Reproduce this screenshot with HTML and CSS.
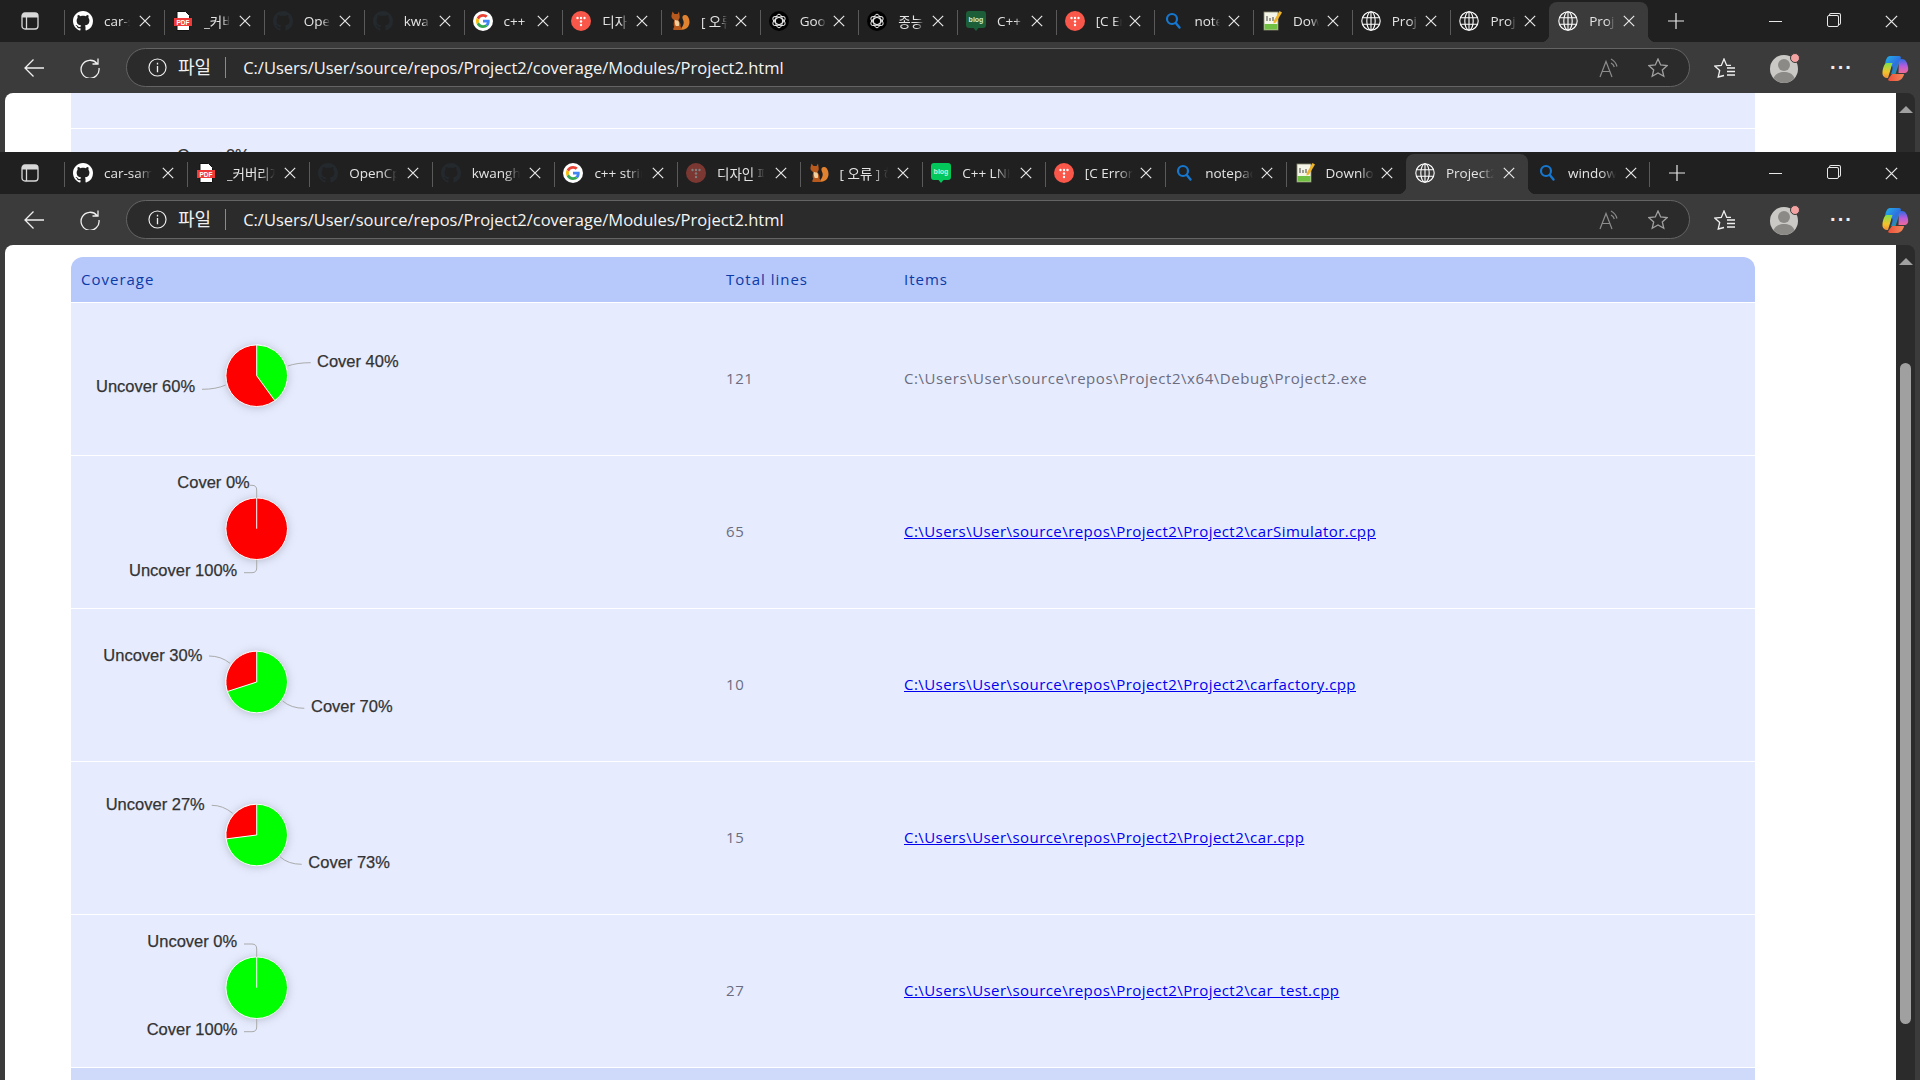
FILE: index.html
```html
<!DOCTYPE html>
<html lang="ko">
<head>
    <meta charset="utf-8">
    <title>Project2 coverage</title>
    <link rel="stylesheet" href="styles.css">
</head>

<body>
    <!-- shared icons -->
    <svg class="defs" aria-hidden="true">
        <defs>
            <linearGradient id="copA" x1="0" y1="0" x2="1" y2="1">
                <stop offset="0" stop-color="#1fb6e8"/>
                <stop offset=".55" stop-color="#2f6fe0"/>
                <stop offset="1" stop-color="#23b26b"/>
            </linearGradient>
            <linearGradient id="copB" x1="0" y1="0" x2="0" y2="1">
                <stop offset="0" stop-color="#2d6be4"/>
                <stop offset=".5" stop-color="#b45cdc"/>
                <stop offset="1" stop-color="#f06a9a"/>
            </linearGradient>
            <linearGradient id="copC" x1="0" y1="0" x2="0" y2="1">
                <stop offset="0" stop-color="#7de04a"/>
                <stop offset=".6" stop-color="#f3c52c"/>
                <stop offset="1" stop-color="#f0903a"/>
            </linearGradient>
            <linearGradient id="copD" x1="0" y1="0" x2="1" y2="0">
                <stop offset="0" stop-color="#f0503c"/>
                <stop offset="1" stop-color="#f08a5a"/>
            </linearGradient>
        </defs>
        <symbol id="gh" viewBox="0 0 16 16"><path fill="currentColor" d="M8 0C3.58 0 0 3.58 0 8c0 3.54 2.29 6.53 5.47 7.59.4.07.55-.17.55-.38 0-.19-.01-.82-.01-1.49-2.01.37-2.53-.49-2.69-.94-.09-.23-.48-.94-.82-1.13-.28-.15-.68-.52-.01-.53.63-.01 1.08.58 1.23.82.72 1.21 1.87.87 2.33.66.07-.52.28-.87.51-1.07-1.78-.2-3.64-.89-3.64-3.95 0-.87.31-1.59.82-2.15-.08-.2-.36-1.02.08-2.12 0 0 .67-.21 2.2.82.64-.18 1.32-.27 2-.27.68 0 1.36.09 2 .27 1.53-1.04 2.2-.82 2.2-.82.44 1.1.16 1.92.08 2.12.51.56.82 1.27.82 2.15 0 3.07-1.87 3.75-3.65 3.95.29.25.54.73.54 1.48 0 1.07-.01 1.93-.01 2.2 0 .21.15.46.55.38A8.013 8.013 0 0016 8c0-4.42-3.58-8-8-8z"/></symbol>
        <symbol id="pdf" viewBox="0 0 20 20"><path fill="#fff" stroke="#111" d="M4 .5h8.500l4 4V19.500H4z"/><rect x="1" y="7" width="18" height="8" fill="#f03a3a"/><text x="10" y="13.500" class="pdf-text">PDF</text></symbol>
        <symbol id="google" viewBox="0 0 48 48"><circle cx="24" cy="24" r="24" fill="#fff"/><g transform="translate(7.200 7.200) scale(.7)"><path fill="#EA4335" d="M24 9.500c3.540 0 6.710 1.220 9.210 3.600l6.850-6.850C35.900 2.380 30.470 0 24 0 14.620 0 6.510 5.380 2.560 13.220l7.980 6.190C12.430 13.720 17.740 9.500 24 9.500z"/><path fill="#4285F4" d="M46.980 24.550c0-1.570-.15-3.090-.38-4.550H24v9.020h12.940c-.58 2.960-2.260 5.480-4.780 7.180l7.730 6c4.510-4.180 7.090-10.360 7.090-17.650z"/><path fill="#FBBC05" d="M10.530 28.590c-.48-1.450-.76-2.990-.76-4.590s.27-3.140.76-4.590l-7.980-6.190C.92 16.460 0 20.120 0 24c0 3.880.92 7.540 2.560 10.780l7.970-6.190z"/><path fill="#34A853" d="M24 48c6.480 0 11.930-2.130 15.890-5.810l-7.730-6c-2.150 1.450-4.920 2.300-8.160 2.300-6.260 0-11.570-4.220-13.470-9.910l-7.980 6.190C6.510 42.620 14.620 48 24 48z"/></g></symbol>
        <symbol id="tistory" viewBox="0 0 20 20"><circle cx="10" cy="10" r="10" fill="#f9574a"/><g fill="#fff"><circle cx="6.500" cy="7" r="1.200"/><circle cx="10" cy="7" r="1.200"/><circle cx="13.500" cy="7" r="1.200"/><circle cx="10" cy="10.500" r="1.200"/><circle cx="10" cy="14" r="1.200"/></g></symbol>
        <symbol id="squirrel" viewBox="0 0 20 20"><path fill="#e0822f" d="M10 19c6 0 9.500-3 9.500-8 0-3.500-1.500-6.500-4-7-2.200-.4-3.500 1.300-3 3.200.6 2.200 1.700 3.300 1 5.800-.5 2-2 4-3.500 6z"/><path fill="#b8591d" d="M2.500 .5L4.500 3h3L9 .5l.7 4.500c.3 2-.6 3.500-1.500 4.200 1.700 1.600 2.800 4 2.300 6.300.6.800 1.500 2 2 3.500H3.500c-.5-1.500 0-2.500.8-3-1-2-.8-4.500.2-6.500C2.500 8 1 6.500 1.500 4.500z"/><path fill="#f2cf9f" d="M4.800 8.800c1 .8 2.200 1 3.400.6.900 1.700 1.200 3.500.6 5.600H5.800c-1-2-1.200-4.200-1-6.200z"/></symbol>
        <symbol id="gpt" viewBox="0 0 20 20"><circle cx="10" cy="10" r="10" fill="#000"/><g fill="none" stroke="#e8e8e8" stroke-width="1"><ellipse cx="10" cy="10" rx="3.500" ry="6.800"/><ellipse cx="10" cy="10" rx="3.500" ry="6.800" transform="rotate(60 10 10)"/><ellipse cx="10" cy="10" rx="3.500" ry="6.800" transform="rotate(120 10 10)"/></g></symbol>
        <symbol id="blog" viewBox="0 0 20 20"><path fill="currentColor" d="M3 0h14a3 3 0 013 3v11a3 3 0 01-3 3h-4.500L10 20l-2.500-3H3a3 3 0 01-3-3V3a3 3 0 013-3z"/><text x="10" y="11" class="blog-text">blog</text></symbol>
        <symbol id="search" viewBox="0 0 20 20"><circle cx="9" cy="8" r="5" fill="none" stroke="#1577cf" stroke-width="2.200"/><path stroke="#1577cf" stroke-width="2.400" stroke-linecap="round" d="M12.800 12l3.700 4.500"/></symbol>
        <symbol id="notepad" viewBox="0 0 20 20"><rect x="2" y="1" width="14" height="18" fill="#f6f6e8" stroke="#8a8a70" stroke-width=".8"/><rect x="2.500" y="13" width="13" height="5.600" fill="#72c043"/><path stroke="#444" d="M5 5v5M8 7v3M11 6v4"/><path fill="#f0b429" d="M17.500 0L20 1.500l-6 10-2.500 1 .2-2.600z"/></symbol>
        <symbol id="globe" viewBox="0 0 20 20"><g fill="none" stroke="currentColor" stroke-width="1.100"><circle cx="10" cy="10" r="9.200"/><ellipse cx="10" cy="10" rx="4.200" ry="9.200"/><path d="M1.500 6.700h17M1.500 13.300h17M10 .8v18.400"/></g></symbol>
        <symbol id="close" viewBox="0 0 12 12"><path stroke="currentColor" stroke-width="1.200" d="M.8.8l10.400 10.400M11.200.8L.8 11.200"/></symbol>
        <symbol id="sidebar" viewBox="0 0 18 18"><rect x="1" y="1" width="16" height="16" rx="3" fill="none" stroke="currentColor" stroke-width="1.300"/><path fill="currentColor" d="M1 4a3 3 0 013-3h10a3 3 0 013 3v1.500H1z"/><path stroke="currentColor" stroke-width="1.300" d="M5.500 5v12"/></symbol>
        <symbol id="back" viewBox="0 0 20 20"><path fill="none" stroke="currentColor" stroke-width="1.300" d="M20 10H1M9.500 1.500L1 10l8.500 8.500"/></symbol>
        <symbol id="reload" viewBox="0 0 20 20"><path fill="none" stroke="currentColor" stroke-width="1.300" d="M17 5.500A9 9 0 1019 10M18 .5V6h-5.500"/></symbol>
        <symbol id="info" viewBox="0 0 20 20"><circle cx="10" cy="10" r="9" fill="none" stroke="currentColor" stroke-width="1.200"/><path stroke="currentColor" stroke-width="1.400" d="M10 8.500V15M10 5v1.800"/></symbol>
        <symbol id="aloud" viewBox="0 0 20 20"><path fill="none" stroke="currentColor" stroke-width="1.200" d="M1 19L7 3.500 13 19M3 13.500h8M12 1c3 1.500 5 4 6 7.500M12 5c1.600.8 2.800 2.200 3.300 4"/></symbol>
        <symbol id="star" viewBox="0 0 20 20"><path fill="none" stroke="currentColor" stroke-width="1.300" d="M10 1l2.700 6 6.500.6-4.900 4.300 1.500 6.400L10 15l-5.800 3.300 1.500-6.400L.8 7.600l6.500-.6z"/></symbol>
        <symbol id="favs" viewBox="0 0 22 20"><path fill="none" stroke="currentColor" stroke-width="1.300" d="M10 17.500L4.200 19l1.500-6.500L.8 8l6.500-.6L10 1l2.700 6.400H17"/><path stroke="currentColor" stroke-width="1.300" d="M13 10h8M13 13.500h8M13 17h8"/></symbol>
        <symbol id="profile" viewBox="0 0 32 32"><circle cx="15" cy="17" r="14" fill="#cbc9c5"/><circle cx="15" cy="13" r="6" fill="#8c8a87"/><path fill="#8c8a87" d="M4.500 26c2-4.500 6-6 10.500-6s8.500 1.500 10.500 6A14 14 0 0115 31 14 14 0 014.500 26z"/><circle cx="26" cy="6" r="4.500" fill="#f4a3a3" stroke="#3b3b3b"/></symbol>
        <symbol id="copilot" viewBox="0 0 28 28"><path fill="url(#copA)" d="M8 2h9c1.500 0 2.300 1 1.800 2.300L13.500 20H9c2-5 2-8 0-9H3C3.500 6 5 2 8 2z"/><path fill="url(#copC)" d="M5 9h5.500L6 24c-3.500 0-6-2-5.500-6C.8 14 2.500 9 5 9z"/><path fill="url(#copB)" d="M17 5h3c3.500 0 5 3 6 8 .8 4-1 6-4 6h-5.500z"/><path fill="url(#copD)" d="M10 20h12c-.5 3-3 7-7 7H8c-1.500 0-2-1-1.700-2z"/></symbol>
    </svg>

    <!-- window behind -->
    <section class="window window-back">
        <div class="tabstrip">
            <svg class="sidebar-btn"><use href="#sidebar"/></svg>
            <div class="tabs tabs-small">
                <div class="tab"><svg class="tab-icon"><use href="#gh"/></svg><span class="tab-title">car-sam</span><svg class="tab-close"><use href="#close"/></svg></div>
                <div class="tab"><svg class="tab-icon"><use href="#pdf"/></svg><span class="tab-title">_커버리</span><svg class="tab-close"><use href="#close"/></svg></div>
                <div class="tab"><svg class="tab-icon dark"><use href="#gh"/></svg><span class="tab-title">OpenC</span><svg class="tab-close"><use href="#close"/></svg></div>
                <div class="tab"><svg class="tab-icon dark"><use href="#gh"/></svg><span class="tab-title">kwangl</span><svg class="tab-close"><use href="#close"/></svg></div>
                <div class="tab"><svg class="tab-icon"><use href="#google"/></svg><span class="tab-title">c++ st</span><svg class="tab-close"><use href="#close"/></svg></div>
                <div class="tab"><svg class="tab-icon"><use href="#tistory"/></svg><span class="tab-title">디자인</span><svg class="tab-close"><use href="#close"/></svg></div>
                <div class="tab"><svg class="tab-icon"><use href="#squirrel"/></svg><span class="tab-title">[ 오류</span><svg class="tab-close"><use href="#close"/></svg></div>
                <div class="tab"><svg class="tab-icon"><use href="#gpt"/></svg><span class="tab-title">Goo</span><svg class="tab-close"><use href="#close"/></svg></div>
                <div class="tab"><svg class="tab-icon"><use href="#gpt"/></svg><span class="tab-title">종능</span><svg class="tab-close"><use href="#close"/></svg></div>
                <div class="tab"><svg class="tab-icon blog-dim"><use href="#blog"/></svg><span class="tab-title">C++ L</span><svg class="tab-close"><use href="#close"/></svg></div>
                <div class="tab"><svg class="tab-icon"><use href="#tistory"/></svg><span class="tab-title">[C Err</span><svg class="tab-close"><use href="#close"/></svg></div>
                <div class="tab"><svg class="tab-icon"><use href="#search"/></svg><span class="tab-title">notep</span><svg class="tab-close"><use href="#close"/></svg></div>
                <div class="tab"><svg class="tab-icon"><use href="#notepad"/></svg><span class="tab-title">Down</span><svg class="tab-close"><use href="#close"/></svg></div>
                <div class="tab"><svg class="tab-icon"><use href="#globe"/></svg><span class="tab-title">Proje</span><svg class="tab-close"><use href="#close"/></svg></div>
                <div class="tab"><svg class="tab-icon"><use href="#globe"/></svg><span class="tab-title">Proje</span><svg class="tab-close"><use href="#close"/></svg></div>
                <div class="tab active"><svg class="tab-icon"><use href="#globe"/></svg><span class="tab-title">Proje</span><svg class="tab-close"><use href="#close"/></svg></div>
            </div>
            <svg class="new-tab" viewBox="0 0 16 16"><path stroke="currentColor" stroke-width="1.200" d="M8 0v16M0 8h16"/></svg>
            <div class="win-controls">
                <span class="win-btn"><span class="win-min"></span></span>
                <span class="win-btn"><span class="win-max"></span></span>
                <span class="win-btn"><svg class="win-close"><use href="#close"/></svg></span>
            </div>
        </div>
        <div class="toolbar">
            <svg class="nav-icon"><use href="#back"/></svg>
            <svg class="nav-icon"><use href="#reload"/></svg>
            <div class="address">
                <svg class="addr-info"><use href="#info"/></svg>
                <span class="addr-scheme">파일</span>
                <span class="addr-url">C:/Users/User/source/repos/Project2/coverage/Modules/Project2.html</span>
                <svg class="addr-aloud"><use href="#aloud"/></svg>
                <svg class="addr-star"><use href="#star"/></svg>
            </div>
            <svg class="tool-favs"><use href="#favs"/></svg>
            <svg class="tool-profile"><use href="#profile"/></svg>
            <span class="tool-dots">···</span>
            <svg class="tool-copilot"><use href="#copilot"/></svg>
        </div>
        <div class="viewport">
            <main class="page">
                <table class="cov-table">
                    <colgroup><col class="col-cov"><col class="col-lines"><col></colgroup>
                    <tr class="row-stub"><td></td><td></td><td></td></tr>
                    <tr>
                        <td class="chart-cell">
                            <svg class="pie" viewBox="0 0 400 152">
                                <circle class="slice-shadow" cx="185.700" cy="72.700" r="30.800"/>
                                <circle class="slice red" cx="185.700" cy="72.700" r="30.800"/>
                                <path class="lead" d="M179 29.300H181Q185.700 29.300 185.700 34V42"/>
                                <text class="pie-label" x="106.300" y="32.300">Cover 0%</text>
                            </svg>
                        </td>
                        <td></td><td></td>
                    </tr>
                </table>
            </main>
            <div class="scrollbar"><span class="scroll-up"></span></div>
        </div>
    </section>

    <!-- window in front -->
    <section class="window window-front">
        <div class="tabstrip">
            <svg class="sidebar-btn"><use href="#sidebar"/></svg>
            <div class="tabs tabs-wide">
                <div class="tab"><svg class="tab-icon"><use href="#gh"/></svg><span class="tab-title">car-sample</span><svg class="tab-close"><use href="#close"/></svg></div>
                <div class="tab"><svg class="tab-icon"><use href="#pdf"/></svg><span class="tab-title">_커버리지</span><svg class="tab-close"><use href="#close"/></svg></div>
                <div class="tab"><svg class="tab-icon dark"><use href="#gh"/></svg><span class="tab-title">OpenCpp</span><svg class="tab-close"><use href="#close"/></svg></div>
                <div class="tab"><svg class="tab-icon dark"><use href="#gh"/></svg><span class="tab-title">kwanghoon</span><svg class="tab-close"><use href="#close"/></svg></div>
                <div class="tab"><svg class="tab-icon"><use href="#google"/></svg><span class="tab-title">c++ string</span><svg class="tab-close"><use href="#close"/></svg></div>
                <div class="tab"><svg class="tab-icon dim"><use href="#tistory"/></svg><span class="tab-title">디자인 패턴</span><svg class="tab-close"><use href="#close"/></svg></div>
                <div class="tab"><svg class="tab-icon"><use href="#squirrel"/></svg><span class="tab-title">[ 오류 ] 해</span><svg class="tab-close"><use href="#close"/></svg></div>
                <div class="tab"><svg class="tab-icon blog-on"><use href="#blog"/></svg><span class="tab-title">C++ LNK</span><svg class="tab-close"><use href="#close"/></svg></div>
                <div class="tab"><svg class="tab-icon"><use href="#tistory"/></svg><span class="tab-title">[C Error]</span><svg class="tab-close"><use href="#close"/></svg></div>
                <div class="tab"><svg class="tab-icon"><use href="#search"/></svg><span class="tab-title">notepad++</span><svg class="tab-close"><use href="#close"/></svg></div>
                <div class="tab"><svg class="tab-icon"><use href="#notepad"/></svg><span class="tab-title">Download</span><svg class="tab-close"><use href="#close"/></svg></div>
                <div class="tab active"><svg class="tab-icon"><use href="#globe"/></svg><span class="tab-title">Project2</span><svg class="tab-close"><use href="#close"/></svg></div>
                <div class="tab tab-end"><svg class="tab-icon"><use href="#search"/></svg><span class="tab-title">windows</span><svg class="tab-close"><use href="#close"/></svg></div>
            </div>
            <svg class="new-tab" viewBox="0 0 16 16"><path stroke="currentColor" stroke-width="1.200" d="M8 0v16M0 8h16"/></svg>
            <div class="win-controls">
                <span class="win-btn"><span class="win-min"></span></span>
                <span class="win-btn"><span class="win-max"></span></span>
                <span class="win-btn"><svg class="win-close"><use href="#close"/></svg></span>
            </div>
        </div>
        <div class="toolbar">
            <svg class="nav-icon"><use href="#back"/></svg>
            <svg class="nav-icon"><use href="#reload"/></svg>
            <div class="address">
                <svg class="addr-info"><use href="#info"/></svg>
                <span class="addr-scheme">파일</span>
                <span class="addr-url">C:/Users/User/source/repos/Project2/coverage/Modules/Project2.html</span>
                <svg class="addr-aloud"><use href="#aloud"/></svg>
                <svg class="addr-star"><use href="#star"/></svg>
            </div>
            <svg class="tool-favs"><use href="#favs"/></svg>
            <svg class="tool-profile"><use href="#profile"/></svg>
            <span class="tool-dots">···</span>
            <svg class="tool-copilot"><use href="#copilot"/></svg>
        </div>
        <div class="viewport">
            <main class="page page-front">
                <table class="cov-table">
                    <colgroup><col class="col-cov"><col class="col-lines"><col></colgroup>
                    <tr class="head-row">
                        <th>Coverage</th>
                        <th>Total lines</th>
                        <th>Items</th>
                    </tr>
                    <tr>
                        <td class="chart-cell">
                            <svg class="pie" viewBox="0 0 400 152">
                                <circle class="slice-shadow" cx="185.700" cy="72.700" r="30.800"/>
                                <circle class="slice red" cx="185.700" cy="72.700" r="30.800"/>
                                <path class="slice green" d="M185.700 72.700V41.900A30.800 30.800 0 0 1 203.800 97.600Z"/>
                                <path class="lead" d="M216.700 63Q226 59.700 239.700 59.700"/>
                                <path class="lead" d="M154.700 82Q145 86.300 131 86.300"/>
                                <text class="pie-label" x="246" y="63.700">Cover 40%</text>
                                <text class="pie-label" x="25" y="88.700">Uncover 60%</text>
                            </svg>
                        </td>
                        <td class="num">121</td>
                        <td class="item">C:\Users\User\source\repos\Project2\x64\Debug\Project2.exe</td>
                    </tr>
                    <tr>
                        <td class="chart-cell">
                            <svg class="pie" viewBox="0 0 400 152">
                                <circle class="slice-shadow" cx="185.700" cy="72.700" r="30.800"/>
                                <circle class="slice red" cx="185.700" cy="72.700" r="30.800"/>
                                <path class="slice-gap" d="M185.700 41.900V72.700"/>
                                <path class="lead" d="M179 29.300H181Q185.700 29.300 185.700 34V42"/>
                                <path class="lead" d="M173 116.700H181Q185.700 116.700 185.700 112V104"/>
                                <text class="pie-label" x="106.300" y="32.300">Cover 0%</text>
                                <text class="pie-label" x="58" y="119.700">Uncover 100%</text>
                            </svg>
                        </td>
                        <td class="num">65</td>
                        <td class="item"><a href="#">C:\Users\User\source\repos\Project2\Project2\carSimulator.cpp</a></td>
                    </tr>
                    <tr>
                        <td class="chart-cell">
                            <svg class="pie" viewBox="0 0 400 152">
                                <circle class="slice-shadow" cx="185.700" cy="73" r="30.800"/>
                                <circle class="slice green" cx="185.700" cy="73" r="30.800"/>
                                <path class="slice red" d="M185.700 73V42.200A30.800 30.800 0 0 0 156.400 82.500Z"/>
                                <path class="lead" d="M138 47Q150 47 159 54.300"/>
                                <path class="lead" d="M211.700 92Q220 99.300 233.300 99.300"/>
                                <text class="pie-label" x="32.300" y="51.700">Uncover 30%</text>
                                <text class="pie-label" x="240" y="102.700">Cover 70%</text>
                            </svg>
                        </td>
                        <td class="num">10</td>
                        <td class="item"><a href="#">C:\Users\User\source\repos\Project2\Project2\carfactory.cpp</a></td>
                    </tr>
                    <tr>
                        <td class="chart-cell">
                            <svg class="pie" viewBox="0 0 400 152">
                                <circle class="slice-shadow" cx="185.700" cy="73" r="30.800"/>
                                <circle class="slice green" cx="185.700" cy="73" r="30.800"/>
                                <path class="slice red" d="M185.700 73V42.200A30.800 30.800 0 0 0 155.100 76.900Z"/>
                                <path class="lead" d="M140.700 43.300Q152 43.300 161.700 51.300"/>
                                <path class="lead" d="M209 94.700Q217 102.300 230.700 102.300"/>
                                <text class="pie-label" x="34.700" y="48">Uncover 27%</text>
                                <text class="pie-label" x="237.300" y="106.300">Cover 73%</text>
                            </svg>
                        </td>
                        <td class="num">15</td>
                        <td class="item"><a href="#">C:\Users\User\source\repos\Project2\Project2\car.cpp</a></td>
                    </tr>
                    <tr>
                        <td class="chart-cell">
                            <svg class="pie" viewBox="0 0 400 152">
                                <circle class="slice-shadow" cx="185.700" cy="72.700" r="30.800"/>
                                <circle class="slice green" cx="185.700" cy="72.700" r="30.800"/>
                                <path class="slice-gap" d="M185.700 41.900V72.700"/>
                                <path class="lead" d="M173 29H181Q185.700 29 185.700 34V42"/>
                                <path class="lead" d="M173 116.700H181Q185.700 116.700 185.700 112V104"/>
                                <text class="pie-label" x="76.300" y="32.300">Uncover 0%</text>
                                <text class="pie-label" x="75.700" y="120">Cover 100%</text>
                            </svg>
                        </td>
                        <td class="num">27</td>
                        <td class="item"><a href="#">C:\Users\User\source\repos\Project2\Project2\car_test.cpp</a></td>
                    </tr>
                    <tr class="foot-row"><td></td><td></td><td></td></tr>
                </table>
            </main>
            <div class="scrollbar">
                <span class="scroll-up"></span>
                <span class="scroll-thumb"></span>
            </div>
        </div>
    </section>
</body>
</html>
```

FILE: styles.css
```css
/* General */
html, body {
    margin: 0;
    height: 100%;
    overflow: hidden;
}

body {
    display: flex;
    flex-direction: column;
    background-color: #202020;
    font-family: "Open Sans", "Noto Sans CJK KR", sans-serif;
}

.defs {
    display: block;
    width: 0;
    height: 0;
}

/* Windows */
.window {
    display: flex;
    flex-direction: column;
    overflow: hidden;
}

.window-back {
    height: 152px;
    flex: none;
}

.window-front {
    flex: 1;
    min-height: 0;
}

/* Tab strip */
.tabstrip {
    display: flex;
    align-items: flex-end;
    height: 42px;
    flex: none;
    background-color: #202020;
    color: #e8e8e8;
}

.sidebar-btn {
    width: 18px;
    height: 18px;
    margin: 0 16px 12px 21px;
    flex: none;
    color: #d8d8d8;
}

.tabs {
    display: flex;
    height: 40px;
    flex: none;
    margin-left: 9px;
}

.tab {
    position: relative;
    display: flex;
    align-items: center;
    box-sizing: border-box;
    height: 40px;
    padding: 0 13px 2px 9px;
    flex: none;
    font-size: 13.500px;
}

.tab::before {
    content: "";
    position: absolute;
    left: 0;
    top: 8px;
    height: 25px;
    width: 1px;
    background-color: #5a5a5a;
}

/* the browser does not space its tabs quite evenly */
.tabs-small .tab {
    width: 98.700px;
}

.tabs-small .tab:nth-child(-n+4) {
    width: 99.900px;
}

.tabs-wide .tab {
    width: 120.400px;
}

.tabs-wide .tab:nth-child(-n+8) {
    width: 122.600px;
}

.tabs-wide .tab.active,
.tabs-wide .tab-end {
    width: 122px;
}

.tab.active {
    background-color: #3b3b3b;
    border-radius: 8px 8px 0 0;
}

.tab.active::before {
    display: none;
}

.tab.active + .tab::before {
    display: none;
}

/* little flares at the foot of the active tab */
.tab.active::after {
    content: "";
    position: absolute;
    left: -8px;
    right: -8px;
    bottom: 0;
    height: 8px;
    z-index: 0;
    background:
        radial-gradient(circle at 0 0, #202020 8px, #3b3b3b 8.500px) left bottom / 8px 8px no-repeat,
        radial-gradient(circle at 100% 0, #202020 8px, #3b3b3b 8.500px) right bottom / 8px 8px no-repeat;
}

.tab-end::after {
    content: "";
    position: absolute;
    right: 0;
    top: 8px;
    height: 25px;
    width: 1px;
    background-color: #5a5a5a;
}

.tab-icon {
    width: 20px;
    height: 20px;
    flex: none;
    color: #fff;
}

.tab-icon.dark {
    color: #24292e;
}

.tab-icon.dim {
    opacity: 0.42;
}

.tab-icon.blog-on {
    color: #03c75a;
}

.tab-icon.blog-dim {
    color: #1c5e38;
}

.blog-text {
    font: bold 7px "Liberation Sans", sans-serif;
    fill: #c8f0d8;
    text-anchor: middle;
}

.pdf-text {
    font: bold 6.500px "Liberation Sans", sans-serif;
    fill: #fff;
    text-anchor: middle;
}

.tab-title {
    margin-left: 11px;
    overflow: hidden;
    white-space: nowrap;
    color: #e4e4e4;
    -webkit-mask-image: linear-gradient(to right, #000 70%, transparent);
    mask-image: linear-gradient(to right, #000 70%, transparent);
}

.tabs-small .tab-title {
    width: 26px;
}

.tabs-wide .tab-title {
    width: 48px;
}

.tab-close {
    width: 12px;
    height: 12px;
    margin-left: auto;
    flex: none;
    color: #e8e8e8;
    position: relative;
    z-index: 1;
}

.tab .tab-icon,
.tab .tab-title {
    position: relative;
    z-index: 1;
}

.new-tab {
    width: 16px;
    height: 16px;
    margin: 0 0 13px 20px;
    flex: none;
}

.tabs-wide + .new-tab {
    margin-left: 19px;
}

.win-controls {
    display: flex;
    margin-left: auto;
    align-self: center;
}

.win-btn {
    display: flex;
    align-items: center;
    justify-content: center;
    width: 58px;
    height: 30px;
}

.win-min {
    display: block;
    width: 13px;
    height: 1px;
    background-color: #e8e8e8;
}

.win-max {
    display: block;
    width: 10px;
    height: 10px;
    border: 1px solid #e8e8e8;
    border-radius: 2px;
    box-shadow: 2px -2px 0 -1px #202020, 2px -2px 0 0 #e8e8e8;
}

.win-close {
    width: 13px;
    height: 13px;
}

/* Toolbar */
.toolbar {
    display: flex;
    align-items: center;
    height: 51px;
    flex: none;
    background-color: #3b3b3b;
    color: #f0f0f0;
}

.nav-icon {
    width: 20px;
    height: 20px;
    margin-left: 24px;
    flex: none;
}

.nav-icon + .nav-icon {
    margin-left: 36px;
}

.address {
    display: flex;
    align-items: center;
    box-sizing: border-box;
    width: 1564px;
    height: 39px;
    margin-left: 26px;
    border: 1px solid #646464;
    border-radius: 20px;
    background-color: #2b2b2b;
    flex: none;
}

.addr-info {
    width: 19px;
    height: 19px;
    margin-left: 21px;
    flex: none;
}

.addr-scheme {
    margin-left: 11px;
    padding-right: 14px;
    border-right: 1px solid #8a8a8a;
    font-size: 18px;
    line-height: 21px;
    color: #f0f0f0;
}

.addr-url {
    margin-left: 17px;
    font-size: 16.500px;
    white-space: nowrap;
    color: #f4f4f4;
}

.addr-aloud {
    width: 20px;
    height: 20px;
    margin-left: auto;
    color: #8c8c8c;
    flex: none;
}

.addr-star {
    width: 20px;
    height: 20px;
    margin-left: 29px;
    margin-right: 21px;
    color: #a0a0a0;
    flex: none;
}

.tool-favs {
    width: 22px;
    height: 20px;
    margin-left: 24px;
    flex: none;
}

.tool-profile {
    width: 32px;
    height: 32px;
    margin-left: 32.500px;
    flex: none;
}

.tool-dots {
    width: 24px;
    margin-left: 29px;
    text-align: center;
    font: bold 20px "Liberation Sans", sans-serif;
    letter-spacing: 1px;
    flex: none;
}

.tool-copilot {
    width: 28px;
    height: 28px;
    margin-left: 28px;
    flex: none;
}

/* Page area */
.viewport {
    display: flex;
    flex: 1;
    min-height: 0;
    padding: 0 5px;
    background-color: #3b3b3b;
}

.page {
    flex: 1;
    min-width: 0;
    overflow: hidden;
    padding-left: 66px;
    background-color: #fff;
    border-top-left-radius: 8px;
}

.page-front {
    padding-top: 12px;
}

.scrollbar {
    display: flex;
    flex-direction: column;
    align-items: center;
    width: 19px;
    flex: none;
    background-color: #2b2b2b;
    border-top-right-radius: 8px;
}

.scroll-up {
    width: 0;
    height: 0;
    margin-top: 13px;
    border-left: 7px solid transparent;
    border-right: 7px solid transparent;
    border-bottom: 7px solid #a0a0a0;
}

.scroll-thumb {
    width: 11px;
    height: 661px;
    margin-top: 98px;
    border-radius: 6px;
    background-color: #a0a0a0;
}

/* Coverage table */
.cov-table {
    width: 1684px;
    table-layout: fixed;
    border-collapse: separate;
    border-spacing: 0;
    font-family: "Open Sans", sans-serif;
    font-size: 15px;
}

.col-cov {
    width: 645px;
}

.col-lines {
    width: 178px;
}

.cov-table th,
.cov-table td {
    padding: 0 0 2px 10px;
    text-align: left;
    background-color: #e6ecfe;
    border-bottom: 1px solid #fff;
}

.cov-table tr {
    height: 153px;
}

.cov-table .row-stub {
    height: 36px;
}

.cov-table .head-row {
    height: 46px;
}

.cov-table th {
    background-color: #b7c8fb;
    font-weight: 400;
    color: #0c3aa6;
    letter-spacing: 1px;
}

.cov-table th:first-child {
    border-top-left-radius: 12px;
}

.cov-table th:last-child {
    border-top-right-radius: 12px;
}

.cov-table .foot-row {
    height: 14px;
}

.cov-table .foot-row td {
    padding: 0;
    background-color: #cfd9f9;
    border-bottom: 0;
}

.cov-table td.chart-cell {
    padding: 0;
    vertical-align: top;
}

.num,
.item {
    color: #6c6c80;
    letter-spacing: 0.55px;
}

.item a {
    color: #0000ee;
    letter-spacing: 0.44px;
}

/* Pie charts */
.pie {
    display: block;
    width: 400px;
    height: 152px;
}

.slice-shadow {
    fill: #8a8a9a;
    filter: blur(5px);
    opacity: 0.55;
    transform: translateY(1px);
}

.slice {
    stroke: #fff;
    stroke-width: 1;
}

.slice.red {
    fill: #ff0000;
}

.slice.green {
    fill: #00ff00;
}

.slice-gap {
    stroke: #fff;
    stroke-width: 1;
    fill: none;
}

.lead {
    fill: none;
    stroke: #aaaaaa;
    stroke-width: 1;
}

.pie-label {
    font-family: "Liberation Sans", sans-serif;
    font-size: 16.500px;
    fill: #333;
    stroke: #333;
    stroke-width: 0.25px;
}
```
